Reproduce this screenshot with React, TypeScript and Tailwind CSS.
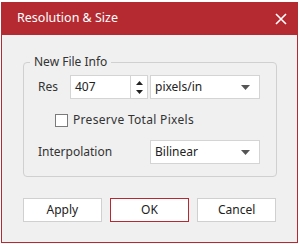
import React from 'react';

const font = { fontFamily: '"Noto Sans", "Open Sans", sans-serif' };

function Caret() {
    return (
        <svg width="9" height="5" viewBox="0 0 9 5" className="shrink-0">
            <path d="M0 0 H9 L4.5 5 Z" fill="#555" />
        </svg>
    );
}

function Select({ value }: { value: string }) {
    return (
        <div className="w-[110px] h-[24px] bg-white border border-[#d4d4d4] flex items-center justify-between pl-[4px] pr-[9px] text-[12px] text-[#222]">
            <span>{value}</span>
            <Caret />
        </div>
    );
}

export default function App() {
    return (
        <div className="w-[299px] h-[244px] bg-white overflow-hidden pt-[2px] pl-[1px]" style={font}>
            <div className="w-[297px] h-[241px] flex flex-col">
                <div className="h-[33px] bg-[#b52a31] flex items-center justify-between pl-[16px] pr-[11px] shrink-0">
                    <span className="text-white text-[12.5px]">Resolution &amp; Size</span>
                    <svg width="12" height="12" viewBox="0 0 12 12">
                        <path d="M1 1 L11 11 M11 1 L1 11" stroke="#fff" strokeWidth="1.6" />
                    </svg>
                </div>
                <div className="flex-1 bg-[#f0f0f0] border-x border-b border-[#b52a31] px-[21px] pt-[19px]">
                    <fieldset className="border border-[#d0d0d0] rounded-[4px] pl-[6px] pr-[16px] pb-[11px] h-[123px]">
                        <legend className="px-[4px] text-[12px] text-[#333] leading-[16px]">New File Info</legend>
                        <div className="flex items-center mt-[5px] pl-[8px]">
                            <span className="w-[32px] text-[12px] text-[#333]">Res</span>
                            <div className="w-[78px] h-[24px] bg-white border border-[#d4d4d4] flex">
                                <div className="flex-1 flex items-center pl-[4px] text-[12px] text-[#222]">407</div>
                                <div className="w-[17px] border-l border-[#d4d4d4] flex flex-col items-center justify-center gap-[5px]">
                                    <svg width="7" height="4" viewBox="0 0 7 4"><path d="M0 4 H7 L3.5 0 Z" fill="#222" /></svg>
                                    <svg width="7" height="4" viewBox="0 0 7 4"><path d="M0 0 H7 L3.5 4 Z" fill="#222" /></svg>
                                </div>
                            </div>
                            <div className="ml-[2px]">
                                <Select value="pixels/in" />
                            </div>
                        </div>
                        <div className="flex items-center mt-[12px] pl-[25px]">
                            <div className="w-[13px] h-[13px] bg-white border border-[#7a7a7a]" />
                            <span className="ml-[5px] text-[12px] text-[#333] tracking-[0.3px]">Preserve Total Pixels</span>
                        </div>
                        <div className="flex items-center mt-[11px] pl-[8px]">
                            <span className="w-[112px] text-[12px] text-[#333]">Interpolation</span>
                            <Select value="Bilinear" />
                        </div>
                    </fieldset>
                    <div className="flex gap-[8px] mt-[21px]">
                        <button className="w-[79px] h-[24px] bg-white border border-[#d0d0d0] text-[12px] text-[#222]">Apply</button>
                        <button className="w-[80px] h-[24px] bg-white border border-[#b52a31] text-[12px] text-[#222]">OK</button>
                        <button className="w-[79px] h-[24px] bg-white border border-[#d0d0d0] text-[12px] text-[#222]">Cancel</button>
                    </div>
                </div>
            </div>
        </div>
    );
}
